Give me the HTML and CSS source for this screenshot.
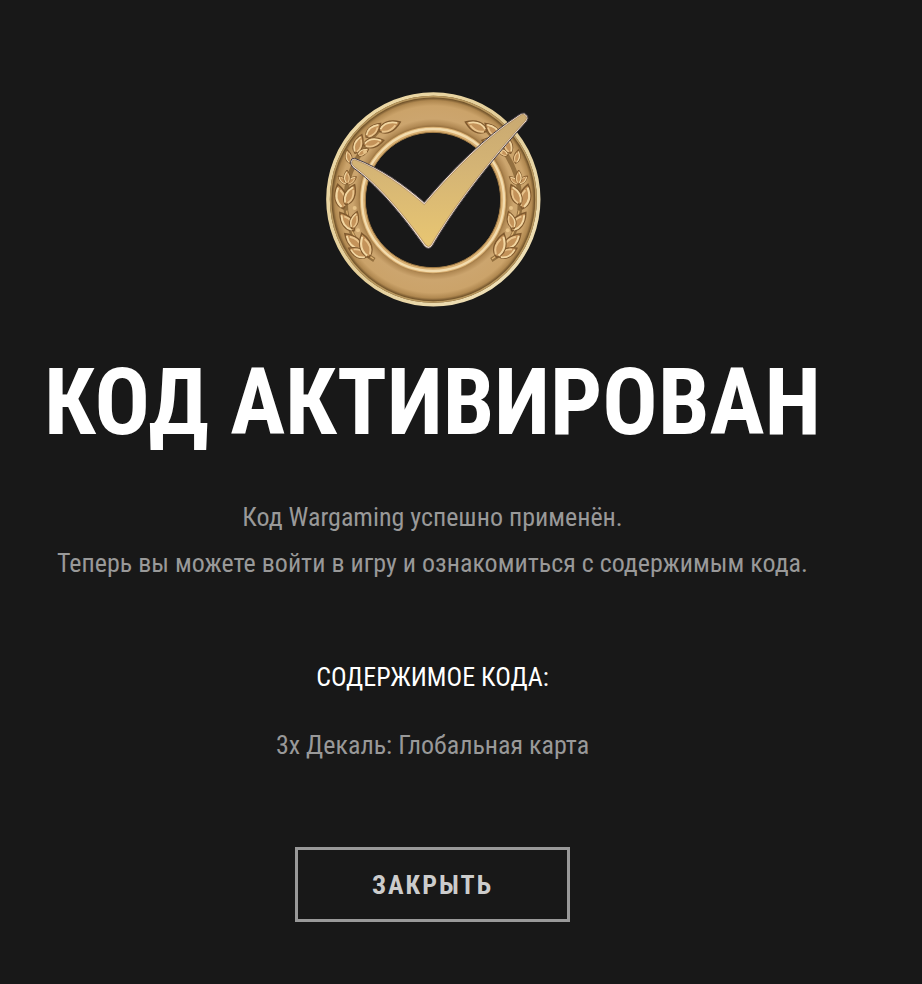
FILE: index.html
```html
<!DOCTYPE html>
<html lang="ru">
  <head>
    <meta charset="UTF-8">
    <meta name="viewport" content="width=device-width, initial-scale=1">
    <title>Код активирован</title>
    <link rel="stylesheet" href="styles.css">
  </head>
  <body>
    <main class="result">
      <svg class="medal" viewBox="0 0 705 705" aria-hidden="true">
        <defs>
          <radialGradient id="ring" gradientUnits="userSpaceOnUse" cx="355" cy="358" r="322">
            <stop offset="0.66" stop-color="#805b2c"/>
            <stop offset="0.7" stop-color="#b28a54"/>
            <stop offset="0.75" stop-color="#cca56e"/>
            <stop offset="0.87" stop-color="#cba36a"/>
            <stop offset="0.92" stop-color="#b08850"/>
            <stop offset="0.95" stop-color="#644822"/>
          </radialGradient>
          <linearGradient id="rim" x1="0" y1="0" x2="1" y2="1">
            <stop offset="0" stop-color="#efdcab"/>
            <stop offset="0.5" stop-color="#e3cd98"/>
            <stop offset="1" stop-color="#f3e6c0"/>
          </linearGradient>
          <linearGradient id="check" x1="0" y1="0" x2="0" y2="1">
            <stop offset="0" stop-color="#c9a971"/>
            <stop offset="0.4" stop-color="#d4b475"/>
            <stop offset="1" stop-color="#e8c672"/>
          </linearGradient>
          <g id="leaf">
            <path d="M0 0C-19 -13 -17 -38 0 -60C17 -38 19 -13 0 0Z" fill="#c4935a" stroke="#805a2e" stroke-width="4"/>
            <path d="M-3 -5C-14 -20 -12 -36 -1 -52" fill="none" stroke="#f3d7a2" stroke-width="5"/>
            <path d="M4 -6C12 -18 11 -32 3 -45" fill="none" stroke="#e9c48c" stroke-width="5"/>
          </g>
          <g id="branch">
            <path d="M178 540C136 517 101 460 93 392C88 320 100 245 190 151" fill="none" stroke="#94703f" stroke-width="14"/>
            <path d="M176 537C137 512 104 460 95 392" fill="none" stroke="#dfb474" stroke-width="4"/>
            <use href="#leaf" transform="translate(192 153) rotate(67) scale(1.15)"/>
            <use href="#leaf" transform="translate(153 171) rotate(47)"/>
            <use href="#leaf" transform="translate(145 195) rotate(77) scale(1.05)"/>
            <use href="#leaf" transform="translate(120 220) rotate(20)"/>
            <use href="#leaf" transform="translate(105 250) rotate(-12) scale(0.7)"/>
            <use href="#leaf" transform="translate(128 226) rotate(60) scale(0.65)"/>
            <use href="#leaf" transform="translate(96 312) rotate(-48) scale(0.6)"/>
            <use href="#leaf" transform="translate(96 312) rotate(52) scale(0.6)"/>
            <use href="#leaf" transform="translate(96 312) rotate(0) scale(0.7)"/>
            <use href="#leaf" transform="translate(85 386) rotate(-13) scale(1.25)"/>
            <use href="#leaf" transform="translate(91 374) rotate(25) scale(1.1)"/>
            <use href="#leaf" transform="translate(117 452) rotate(-38) scale(1.15)"/>
            <use href="#leaf" transform="translate(110 446) rotate(18) scale(0.9)"/>
            <use href="#leaf" transform="translate(140 508) rotate(-47) scale(1.15)"/>
            <use href="#leaf" transform="translate(155 531) rotate(-64)"/>
            <use href="#leaf" transform="translate(162 532) rotate(-17) scale(1.25)"/>
            <circle cx="150" cy="215" r="6" fill="#e6c288"/>
            <circle cx="119" cy="384" r="6" fill="#e6c288"/>
            <circle cx="129" cy="451" r="6" fill="#e6c288"/>
          </g>
        </defs>
        <!-- ring -->
        <circle cx="355" cy="358" r="262" fill="none" stroke="url(#ring)" stroke-width="106"/>
        <circle cx="355" cy="358" r="316" fill="none" stroke="url(#rim)" stroke-width="11"/>
        <circle cx="355" cy="358" r="308" fill="none" stroke="#b8975e" stroke-width="5"/>
        <circle cx="354" cy="360" r="211" fill="none" stroke="#d8ae70" stroke-width="17"/>
        <circle cx="354" cy="360" r="213" fill="none" stroke="#f3dcae" stroke-width="7"/>
        <circle cx="354" cy="360" r="203" fill="none" stroke="#a07a44" stroke-width="3"/>
        <!-- laurel -->
        <use href="#branch"/>
        <use href="#branch" transform="translate(707 0) scale(-1 1)"/>
        <!-- check mark -->
        <path class="check-edge" d="M119 235Q108 234 107 244Q105 254 114 263C180 310 255 395 328 499Q341 512 352 498C420 380 525 245 635 124Q641 116 638 108L628 99Q620 98 612 104C510 170 410 270 328 367C270 316 195 263 119 235Z"/>
        <path class="check-face" d="M119 239Q112 239 111 246Q110 253 118 260C184 308 260 393 332 495Q341 504 348 495C417 377 522 242 631 122Q636 115 634 110L626 103Q620 102 614 108C512 174 412 275 328 374C268 321 194 268 119 239Z"/>
      </svg>
      <h1 class="title">Код активирован</h1>
      <p class="text">Код Wargaming успешно применён.<br>Теперь вы можете войти в игру и ознакомиться с содержимым кода.</p>
      <h2 class="subtitle">Содержимое кода:</h2>
      <p class="text reward">3x Декаль: Глобальная карта</p>
      <button class="close" type="button">Закрыть</button>
    </main>
  </body>
</html>
```
FILE: styles.css
```css
body {
  margin: 0;
  background-color: #181818;
  color: #999;
  font-family: "Roboto Condensed", "Liberation Sans Narrow", Roboto, sans-serif;
  font-size: 26px;
  line-height: 46px;
}

.result {
  display: flex;
  flex-direction: column;
  align-items: center;
  padding: 80px 57px 62px 0;
  text-align: center;
}

.medal {
  width: 235px;
  height: 235px;
}

.check-edge {
  fill: #efdccb;
  stroke: #443d42;
  stroke-width: 3;
}

.check-face {
  fill: url(#check);
  stroke: #a38255;
  stroke-width: 2;
}

.title {
  margin: 38px 0 41px;
  color: #fff;
  font-size: 92px;
  font-weight: 700;
  line-height: 100px;
  text-transform: uppercase;
  white-space: nowrap;
}

.text {
  margin: 0;
}

.subtitle {
  margin: 68px 0 22px;
  color: #fff;
  font-size: 26px;
  font-weight: 400;
  text-transform: uppercase;
}

.close {
  margin-top: 79px;
  padding: 12px 74px 11px;
  border: 3px solid #999;
  background: none;
  color: #ccc;
  font-family: inherit;
  font-size: 26px;
  font-weight: 700;
  line-height: 46px;
  letter-spacing: 2px;
  text-transform: uppercase;
  cursor: pointer;
}

.close:hover {
  border-color: #fff;
  color: #fff;
}
```
